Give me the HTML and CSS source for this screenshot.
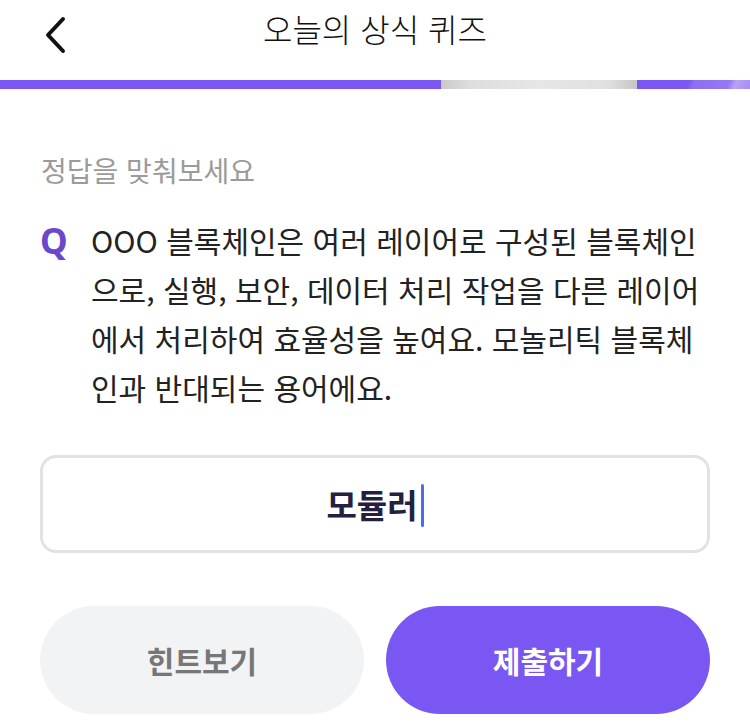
FILE: index.html
```html
<!DOCTYPE html>
<html lang="ko">
<head>
<meta charset="UTF-8">
<meta name="viewport" content="width=device-width, initial-scale=1.0">
<title>오늘의 상식 퀴즈</title>
<link rel="stylesheet" href="styles.css">
</head>
<body>
    <header class="top-bar">
        <a class="back-btn" href="#" aria-label="뒤로">
            <svg width="24" height="38" viewBox="0 0 24 38">
                <path d="M20 3 L5 19 L20 35" fill="none" stroke="#111" stroke-width="4" stroke-linecap="round" stroke-linejoin="round"/>
            </svg>
        </a>
        <h1 class="title">오늘의 상식 퀴즈</h1>
        <span></span>
    </header>

    <div class="progress">
        <div class="seg seg-done"></div>
        <div class="seg seg-now"></div>
        <div class="seg seg-rest"></div>
    </div>

    <main class="quiz">
        <p class="hint-label">정답을 맞춰보세요</p>

        <div class="question">
            <span class="q-mark">Q</span>
            <p class="q-text">OOO 블록체인은 여러 레이어로 구성된 블록체인으로, 실행, 보안, 데이터 처리 작업을 다른 레이어에서 처리하여 효율성을 높여요. 모놀리틱 블록체인과 반대되는 용어에요.</p>
        </div>

        <div class="answer-box">
            <span class="answer">모듈러</span><span class="caret"></span>
        </div>

        <div class="actions">
            <button type="button" class="btn btn-hint">힌트보기</button>
            <button type="button" class="btn btn-submit">제출하기</button>
        </div>
    </main>
</body>
</html>
```

FILE: styles.css
```css
body {
  margin: 0;
  background-color: #fff;
  font-family: "Noto Sans CJK KR", "Noto Sans", sans-serif;
  color: #222;
}
.top-bar {
  height: 80px;
  display: grid;
  grid-template-columns: 1fr auto 1fr;
  align-items: center;
}
.back-btn {
  display: flex;
  padding-left: 43px;
  margin-top: -10px;
}
.title {
  margin: -24px 0 0 0;
  font-size: 32px;
  font-weight: 300;
  color: #111;
}
.progress {
  display: flex;
  height: 9px;
}
.seg-done {
  width: 441px;
  background-color: #7a57f2;
}
.seg-now {
  width: 196px;
  background: linear-gradient(to right, #c9c9c9 0%, #dedede 15%, #e6e6e6 50%, #e0e0e0 85%, #c6c6c6 100%);
}
.seg-rest {
  flex-grow: 1;
  background: linear-gradient(110deg, #7a57f2 0%, #7a57f2 45%, #8e6ef3 50%, #9479f2 80%, #b6a3f6 86%, #a58df3 100%);
}
.quiz {
  padding: 0 40px;
}
.hint-label {
  margin: 63px 0 0 1px;
  font-size: 28px;
  line-height: 36px;
  color: #9b9b9b;
}
.question {
  display: flex;
  margin-top: 28px;
}
.q-mark {
  flex: 0 0 51px;
  font-family: "Noto Sans", sans-serif;
  font-weight: 700;
  font-size: 35px;
  line-height: 49px;
  color: #6a48c9;
}
.q-text {
  margin: 0;
  font-size: 30px;
  line-height: 49px;
  color: #222;
}
.answer-box {
  margin-top: 43px;
  height: 92px;
  border: 3px solid #e2e2e2;
  border-radius: 16px;
  display: flex;
  justify-content: center;
  align-items: center;
}
.answer {
  font-size: 33px;
  font-weight: 700;
  color: #24213f;
}
.caret {
  width: 3px;
  height: 43px;
  margin-left: 3px;
  margin-top: 2px;
  border-radius: 2px;
  background-color: #4a6ee6;
}
.actions {
  display: flex;
  gap: 22px;
  margin-top: 53px;
}
.btn {
  flex: 1;
  height: 108px;
  border: none;
  border-radius: 54px;
  font-family: "Noto Sans CJK KR", sans-serif;
  font-size: 30px;
  font-weight: 700;
  cursor: pointer;
}
.btn-hint {
  background-color: #f2f3f5;
  color: #777;
}
.btn-submit {
  background-color: #7a57f2;
  color: #fff;
}
```
